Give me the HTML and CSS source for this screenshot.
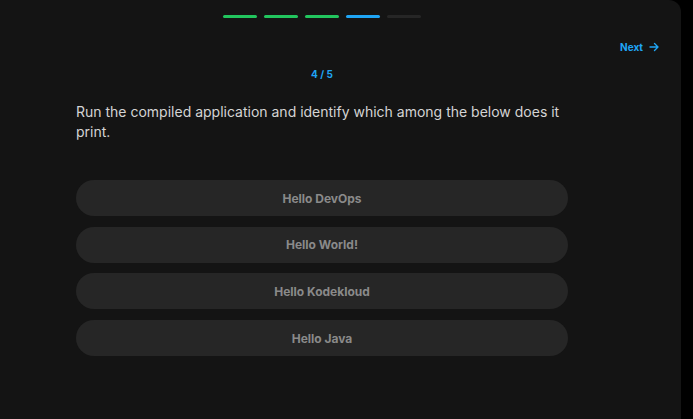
FILE: index.html
```html
<!DOCTYPE html>
<html>
<head>
<meta charset="utf-8">
<link rel="stylesheet" href="styles.css">
</head>
<body>
<div class="card">
  <div class="main">
    <div class="progress">
      <span class="seg done"></span>
      <span class="seg done"></span>
      <span class="seg done"></span>
      <span class="seg current"></span>
      <span class="seg"></span>
    </div>
    <div class="counter">4 / 5</div>
    <p class="question">Run the compiled application and identify which among the below does it print.</p>
    <div class="options">
      <div class="option">Hello DevOps</div>
      <div class="option">Hello World!</div>
      <div class="option">Hello Kodekloud</div>
      <div class="option">Hello Java</div>
    </div>
  </div>
  <div class="side">
    <a class="next">Next
      <svg class="arrow" viewBox="0 0 10 10" width="10" height="10"><path d="M1 5h8M5.5 1.5L9 5 5.5 8.5" fill="none" stroke="currentColor" stroke-width="1.4" stroke-linecap="round" stroke-linejoin="round"/></svg>
    </a>
  </div>
</div>
</body>
</html>
```

FILE: styles.css
```css
html, body {
  margin: 0;
  padding: 0;
  background: #000;
}
body {
  font-family: Inter, "Noto Sans", sans-serif;
}
.card {
  width: 681px;
  height: 419px;
  background: #141414;
  border-top-right-radius: 12px;
  display: flex;
}
.main {
  margin-left: 76px;
  width: 492px;
  display: flex;
  flex-direction: column;
}
.progress {
  display: flex;
  justify-content: center;
  gap: 7px;
  padding-top: 15px;
}
.seg {
  width: 34px;
  height: 3px;
  border-radius: 2px;
  background: #262626;
}
.seg.done { background: #22c55e; }
.seg.current { background: #1fa5f5; }
.counter {
  margin-top: 50px;
  text-align: center;
  font-size: 10px;
  line-height: 12px;
  font-weight: 700;
  color: #1fa5f5;
}
.question {
  margin: 22px 0 0 0;
  font-size: 14px;
  line-height: 20px;
  color: #d4d4d4;
}
.options {
  margin-top: 38px;
  display: flex;
  flex-direction: column;
  gap: 10.7px;
}
.option {
  height: 36px;
  border-radius: 18px;
  background: #262626;
  display: flex;
  align-items: center;
  justify-content: center;
  font-size: 12px;
  font-weight: 700;
  color: #8a8a8a;
}
.side {
  flex: 1;
  display: flex;
  justify-content: flex-end;
  align-items: flex-start;
  padding-top: 41px;
  padding-right: 22px;
}
.next {
  display: flex;
  align-items: center;
  gap: 6px;
  font-size: 10px;
  line-height: 12px;
  font-weight: 700;
  color: #1fa5f5;
}
.arrow { display: block; }
```
